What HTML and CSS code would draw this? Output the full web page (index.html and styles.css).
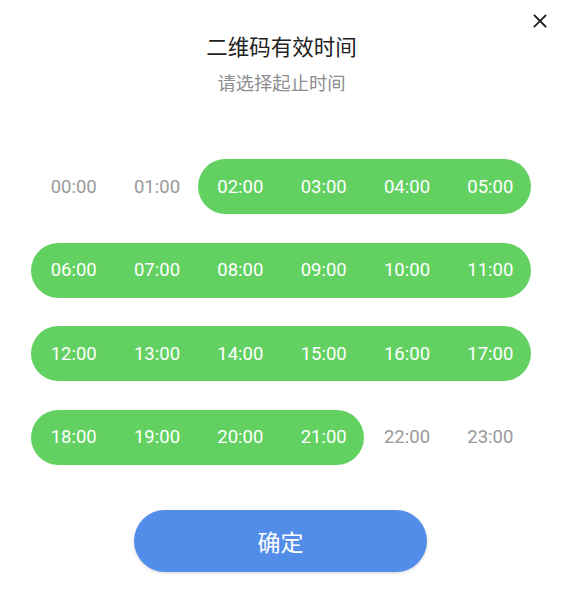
FILE: index.html
```html
<!DOCTYPE html>
<html>
<head>
<meta charset="utf-8">
<link rel="stylesheet" href="styles.css">
</head>
<body>
<div class="dialog">
  <button class="close" aria-label="close">
    <svg width="14" height="14" viewBox="0 0 14 14"><path d="M1.5 1.5L12.5 12.5M12.5 1.5L1.5 12.5" stroke="#222" stroke-width="1.8" stroke-linecap="square"/></svg>
  </button>
  <div class="title">二维码有效时间</div>
  <div class="subtitle">请选择起止时间</div>
  <div class="grid">
    <div class="cell">00:00</div>
    <div class="cell">01:00</div>
    <div class="cell sel start">02:00</div>
    <div class="cell sel">03:00</div>
    <div class="cell sel">04:00</div>
    <div class="cell sel end">05:00</div>
    <div class="cell sel start">06:00</div>
    <div class="cell sel">07:00</div>
    <div class="cell sel">08:00</div>
    <div class="cell sel">09:00</div>
    <div class="cell sel">10:00</div>
    <div class="cell sel end">11:00</div>
    <div class="cell sel start">12:00</div>
    <div class="cell sel">13:00</div>
    <div class="cell sel">14:00</div>
    <div class="cell sel">15:00</div>
    <div class="cell sel">16:00</div>
    <div class="cell sel end">17:00</div>
    <div class="cell sel start">18:00</div>
    <div class="cell sel">19:00</div>
    <div class="cell sel">20:00</div>
    <div class="cell sel end">21:00</div>
    <div class="cell">22:00</div>
    <div class="cell">23:00</div>
  </div>
  <div class="actions">
    <button class="confirm">确定</button>
  </div>
</div>
</body>
</html>
```
FILE: styles.css
```css
* { box-sizing: border-box; }
html, body { margin: 0; padding: 0; background: #fff; }
body { font-family: Roboto, "Noto Sans CJK SC", sans-serif; }
.dialog {
  position: relative;
  width: 563px;
  height: 593px;
  padding-top: 31px;
}
.close {
  position: absolute;
  top: 14px;
  right: 16px;
  width: 14px;
  height: 14px;
  padding: 0;
  border: 0;
  background: none;
  display: flex;
}
.title {
  text-align: center;
  font-size: 21.5px;
  line-height: 30px;
  color: #222;
  font-family: "Noto Sans CJK SC", sans-serif;
}
.subtitle {
  margin-top: 8px;
  text-align: center;
  font-size: 18.3px;
  line-height: 26px;
  color: #8e8e8e;
  font-family: "Noto Sans CJK SC", sans-serif;
}
.grid {
  margin: 64px 0 0 31px;
  width: 500px;
  display: grid;
  grid-template-columns: repeat(6, 1fr);
  row-gap: 28.5px;
}
.cell {
  height: 55px;
  display: flex;
  align-items: center;
  justify-content: center;
  padding-left: 2px;
  font-size: 18.5px;
  color: #999;
}
.cell.sel { background: #62d162; color: #fff; }
.cell.start { border-radius: 27.5px 0 0 27.5px; }
.cell.end { border-radius: 0 27.5px 27.5px 0; }
.actions {
  display: flex;
  justify-content: center;
  margin-top: 45px;
  padding-right: 2px;
}
.confirm {
  width: 293px;
  height: 62px;
  border: 0;
  border-radius: 31px;
  background: #528ee9;
  color: #fff;
  font-size: 23px;
  font-family: "Noto Sans CJK SC", sans-serif;
  box-shadow: 0 1px 3px rgba(0,0,0,0.18);
}
```
